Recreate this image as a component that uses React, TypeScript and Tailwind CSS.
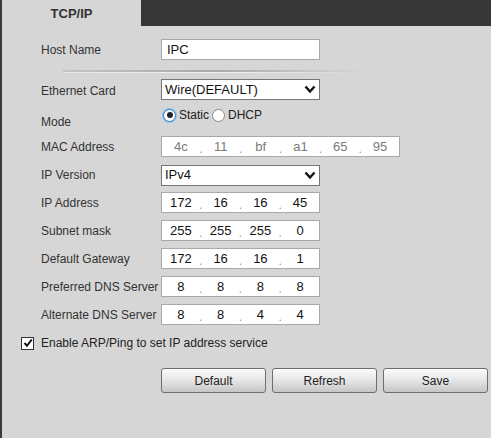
import React from "react";

const font = { fontFamily: '"Liberation Sans", Arial, sans-serif' };

function Label({ children, className = "" }: { children: React.ReactNode; className?: string }) {
    return <div className={"w-[120px] shrink-0 text-[12px] text-[#333]" + " " + className}>{children}</div>;
}

function Chevron() {
    return (
        <svg width="12" height="9" viewBox="0 0 12 9" className="mr-[3px]">
            <polyline points="1.5,1.5 6,6.5 10.5,1.5" fill="none" stroke="#111" strokeWidth="2.4" />
        </svg>
    );
}

function Select({ value }: { value: string }) {
    return (
        <div className="w-[159px] h-[21px] bg-white border border-[#767676] flex items-center justify-between pl-[3px] text-[13px] text-[#111]">
            <span>{value}</span>
            <Chevron />
        </div>
    );
}

function IpBox({ parts, width, seg, disabled }: { parts: string[]; width: string; seg: string; disabled?: boolean }) {
    return (
        <div className={"h-[21px] bg-white border border-[#a9a9a9] flex items-center px-[4px] text-[13px] " + width + (disabled ? " text-[#7a7a7a]" : " text-[#111]")}>
            {parts.map((p, i) => (
                <React.Fragment key={i}>
                    {i > 0 && <span className="w-[10px] text-center text-[#999] text-[12px] leading-none pt-[4px]">.</span>}
                    <span className={seg + " text-center"}>{p}</span>
                </React.Fragment>
            ))}
        </div>
    );
}

function Radio({ checked }: { checked?: boolean }) {
    return (
        <span
            className={
                "w-[13px] h-[13px] rounded-full bg-white flex items-center justify-center " +
                (checked ? "border border-[#2b7fd0] shadow-[0_0_0_1px_#8cc0ee]" : "border border-[#8a8a8a]")
            }
        >
            {checked && <span className="w-[6px] h-[6px] rounded-full bg-[#222]" />}
        </span>
    );
}

function Btn({ children }: { children: React.ReactNode }) {
    return (
        <button className="w-[105px] h-[25px] rounded-[3px] border border-[#6e6e6e] bg-gradient-to-b from-[#fbfbfb] via-[#e6e6e6] to-[#c6c6c6] text-[12px] text-[#222]">
            {children}
        </button>
    );
}

const ipRows: { label: string; parts: string[] }[] = [
    { label: "IP Address", parts: ["172", "16", "16", "45"] },
    { label: "Subnet mask", parts: ["255", "255", "255", "0"] },
    { label: "Default Gateway", parts: ["172", "16", "16", "1"] },
    { label: "Preferred DNS Server", parts: ["8", "8", "8", "8"] },
    { label: "Alternate DNS Server", parts: ["8", "8", "4", "4"] },
];

export default function App() {
    return (
        <div className="w-[491px] h-[438px] bg-[#d6d6d6] border-l-2 border-[#3a3a3a] flex flex-col" style={font}>
            {/* Tabs */}
            <div className="flex h-[26px] shrink-0">
                <div className="w-[139px] flex items-center justify-center text-[13px] font-bold text-[#333] pt-[1px]">TCP/IP</div>
                <div className="flex-1 bg-[#363636]" />
            </div>

            <div className="pl-[39px] flex flex-col">
                {/* Host name */}
                <div className="flex items-center mt-[13px] h-[21px]">
                    <Label>Host Name</Label>
                    <div className="w-[159px] h-[21px] bg-white border border-[#a9a9a9] flex items-center px-[5px] text-[13px] text-[#111]">IPC</div>
                </div>

                {/* Separator */}
                <div className="mt-[10px] ml-[22px] w-[300px] flex flex-col">
                    <div className="h-[2px] bg-gradient-to-r from-[#c4c4c4] via-[#a9a9a9] to-[#d6d6d6]" />
                    <div className="h-[1px] bg-gradient-to-r from-[#e8e8e8] via-[#f2f2f2] to-[#d6d6d6]" />
                </div>

                <div className="flex items-center mt-[6px] h-[21px]">
                    <Label className="pt-[2px]">Ethernet Card</Label>
                    <Select value="Wire(DEFAULT)" />
                </div>

                <div className="flex items-start mt-[4px] h-[32px]">
                    <Label className="pt-[9px]">Mode</Label>
                    <div className="flex items-center gap-[3px] text-[12px] text-[#222] ml-[2px] pt-[2px]">
                        <Radio checked />
                        <span>Static</span>
                        <Radio />
                        <span>DHCP</span>
                    </div>
                </div>

                <div className="flex items-center h-[21px]">
                    <Label>MAC Address</Label>
                    <IpBox parts={["4c", "11", "bf", "a1", "65", "95"]} width="w-[239px]" seg="w-[30px]" disabled />
                </div>

                <div className="flex items-center mt-[8px] h-[20px]">
                    <Label>IP Version</Label>
                    <Select value="IPv4" />
                </div>

                {ipRows.map((r) => (
                    <div key={r.label} className="flex items-center h-[21px] mt-[7px]">
                        <Label>{r.label}</Label>
                        <IpBox parts={r.parts} width="w-[159px]" seg="w-[30px]" />
                    </div>
                ))}

                {/* ARP checkbox */}
                <div className="flex items-center mt-[11px] -ml-[20px] h-[14px]">
                    <span className="w-[13px] h-[13px] bg-white border border-[#333] flex items-center justify-center mr-[7px]">
                        <svg width="10" height="10" viewBox="0 0 10 10">
                            <polyline points="1.5,5 4,7.8 8.8,1.5" fill="none" stroke="#111" strokeWidth="2" />
                        </svg>
                    </span>
                    <span className="text-[12px] text-[#222]">Enable ARP/Ping to set IP address service</span>
                </div>

                {/* Buttons */}
                <div className="flex gap-[6px] mt-[18px] ml-[120px]">
                    <Btn>Default</Btn>
                    <Btn>Refresh</Btn>
                    <Btn>Save</Btn>
                </div>
            </div>
        </div>
    );
}
